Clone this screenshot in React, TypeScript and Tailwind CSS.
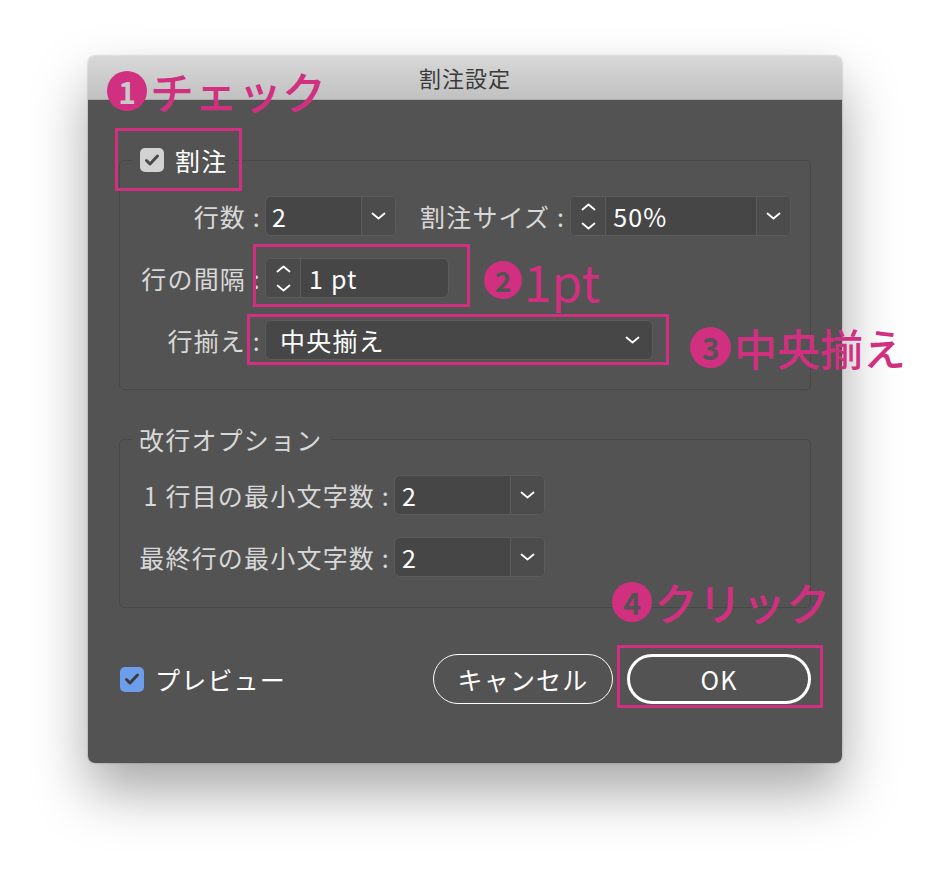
import React from "react";

function Chevron() {
  return (
    <svg width="15" height="8" viewBox="0 0 15 8" fill="none">
      <path d="M1.5 1.5 L7.5 6.5 L13.5 1.5" stroke="white" strokeWidth="1.8" strokeLinecap="round" strokeLinejoin="round" />
    </svg>
  );
}

function ChevronUp() {
  return (
    <svg width="15" height="8" viewBox="0 0 15 8" fill="none">
      <path d="M1.5 6.5 L7.5 1.5 L13.5 6.5" stroke="white" strokeWidth="1.8" strokeLinecap="round" strokeLinejoin="round" />
    </svg>
  );
}

function Stepper() {
  return (
    <div className="w-[35px] h-full flex flex-col items-center justify-center gap-[11px] bg-[#4a4a4a] border-r border-[#5c5c5c]">
      <ChevronUp />
      <Chevron />
    </div>
  );
}

function DropBtn() {
  return (
    <div className="w-[34px] h-full flex items-center justify-center border-l border-[#5c5c5c] bg-[#4c4c4c]">
      <Chevron />
    </div>
  );
}

function Check({ color }: { color: string }) {
  return (
    <svg width="16" height="14" viewBox="0 0 16 14" fill="none">
      <path d="M2.5 7.5 L6 11 L13.5 3" stroke={color} strokeWidth="3" strokeLinecap="round" strokeLinejoin="round" />
    </svg>
  );
}

function Circle({ n, digit, className }: { n: string; digit: string; className: string }) {
  return (
    <div className={`rounded-full bg-[#d0307f] flex items-center justify-center font-bold ${className}`} style={{ color: digit }}>
      {n}
    </div>
  );
}

export default function App() {
  return (
    <div className="relative w-[949px] h-[871px] bg-white overflow-hidden font-['Noto_Sans_CJK_JP',sans-serif]">
      <div className="pt-[56px] pl-[88px]">
        <div className="w-[754px] rounded-[7px] overflow-hidden shadow-[0_28px_55px_rgba(0,0,0,0.35),0_0_2px_rgba(0,0,0,0.35)]">
          {/* title bar */}
          <div className="h-[44px] flex items-center justify-center bg-gradient-to-b from-[#d8d8d8] to-[#c1c1c1] border-b border-[#adadad] text-[22px] text-[#3a3a3a] tracking-[1px]">
            割注設定
          </div>
          {/* body */}
          <div className="h-[663px] bg-[#535353] px-[31px] pt-[45px] text-[25px] tracking-[1.2px] leading-[30px] text-[#d8d8d8]">
            {/* group 1 */}
            <fieldset className="border border-[#474747] rounded-[5px]">
              <legend className="ml-[12px] px-[8px]">
                <div className="flex items-center h-[30px]">
                  <div className="w-[24px] h-[24px] rounded-[5px] bg-[#d2d2d2] flex items-center justify-center">
                    <Check color="#4a4a4a" />
                  </div>
                  <span className="ml-[11px] text-white">割注</span>
                </div>
              </legend>
              <div className="pt-[21px] pb-[29px] flex flex-col gap-[22px]">
                {/* row 1 */}
                <div className="flex items-center h-[40px]">
                  <div className="w-[141px] text-right">行数 :</div>
                  <div className="ml-[4px] flex h-[40px] w-[131px] rounded-[6px] border border-[#5c5c5c] bg-[#464646] overflow-hidden">
                    <div className="flex-1 flex items-center pl-[6px] text-white">2</div>
                    <DropBtn />
                  </div>
                  <div className="ml-[24px] mr-[5px]">割注サイズ :</div>
                  <div className="flex h-[40px] w-[221px] rounded-[6px] border border-[#5c5c5c] bg-[#464646] overflow-hidden">
                    <Stepper />
                    <div className="flex-1 flex items-center pl-[7px] text-white">50%</div>
                    <DropBtn />
                  </div>
                </div>
                {/* row 2 */}
                <div className="flex items-center h-[40px]">
                  <div className="w-[141px] text-right">行の間隔 :</div>
                  <div className="ml-[4px] flex h-[40px] w-[184px] rounded-[6px] border border-[#5c5c5c] bg-[#464646] overflow-hidden">
                    <Stepper />
                    <div className="flex-1 flex items-center pl-[8px] text-white">1 pt</div>
                  </div>
                </div>
                {/* row 3 */}
                <div className="flex items-center h-[40px]">
                  <div className="w-[141px] text-right">行揃え :</div>
                  <div className="ml-[4px] flex items-center justify-between h-[40px] w-[388px] rounded-[6px] border border-[#5c5c5c] bg-[#474747] pl-[14px] pr-[12px] text-white">
                    <span>中央揃え</span>
                    <Chevron />
                  </div>
                </div>
              </div>
            </fieldset>

            {/* group 2 */}
            <fieldset className="mt-[34px] border border-[#474747] rounded-[5px]">
              <legend className="ml-[12px] pl-[7px] pr-[9px]">
                <div className="h-[30px] flex items-center">改行オプション</div>
              </legend>
              <div className="pt-[21px] pb-[30px] flex flex-col gap-[22px]">
                <div className="flex items-center h-[40px]">
                  <div className="w-[270px] text-right">1 行目の最小文字数 :</div>
                  <div className="ml-[4px] flex h-[40px] w-[151px] rounded-[6px] border border-[#5c5c5c] bg-[#464646] overflow-hidden">
                    <div className="flex-1 flex items-center pl-[7px] text-white">2</div>
                    <DropBtn />
                  </div>
                </div>
                <div className="flex items-center h-[40px]">
                  <div className="w-[270px] text-right">最終行の最小文字数 :</div>
                  <div className="ml-[4px] flex h-[40px] w-[151px] rounded-[6px] border border-[#5c5c5c] bg-[#464646] overflow-hidden">
                    <div className="flex-1 flex items-center pl-[7px] text-white">2</div>
                    <DropBtn />
                  </div>
                </div>
              </div>
            </fieldset>

            {/* bottom row */}
            <div className="mt-[46px] flex items-center justify-between">
              <div className="flex items-center ml-[1px]">
                <div className="w-[24px] h-[25px] rounded-[5px] bg-[#6d9eec] flex items-center justify-center">
                  <Check color="#3c3c3c" />
                </div>
                <span className="ml-[11px] text-white">プレビュー</span>
              </div>
              <div className="flex items-center gap-[14px]">
                <div className="w-[180px] h-[50px] rounded-full border-[1.5px] border-white flex items-center justify-center text-white">
                  キャンセル
                </div>
                <div className="w-[184px] h-[50px] rounded-full border-[3px] border-white flex items-center justify-center text-white">
                  OK
                </div>
              </div>
            </div>
          </div>
        </div>
      </div>

      {/* annotation boxes */}
      <div className="absolute left-[115px] top-[128px] w-[127px] h-[63px] border-[3px] border-[#d0307f]" />
      <div className="absolute left-[253px] top-[244px] w-[217px] h-[63px] border-[3px] border-[#d0307f]" />
      <div className="absolute left-[247px] top-[314px] w-[422px] h-[51px] border-[3px] border-[#d0307f]" />
      <div className="absolute left-[617px] top-[645px] w-[206px] h-[63px] border-[3px] border-[#d0307f]" />

      {/* annotation labels */}
      <div className="absolute left-[107px] top-[69px] flex items-center text-[#d0307f]">
        <Circle n="1" digit="#c9c9c9" className="w-[40px] h-[40px] text-[30px]" />
        <span className="ml-[3px] text-[44px] leading-[44px] font-medium">チェック</span>
      </div>
      <div className="absolute left-[484px] top-[258px] flex items-center text-[#d0307f]">
        <Circle n="2" digit="#535353" className="w-[38px] h-[38px] text-[28px]" />
        <span className="ml-[2px] text-[50px] leading-[44px] font-normal">1pt</span>
      </div>
      <div className="absolute left-[690px] top-[325px] flex items-center text-[#d0307f]">
        <Circle n="3" digit="#535353" className="w-[41px] h-[41px] text-[30px]" />
        <span className="ml-[3px] text-[43px] leading-[44px] font-medium">中央揃え</span>
      </div>
      <div className="absolute left-[612px] top-[580px] flex items-center text-[#d0307f]">
        <Circle n="4" digit="#535353" className="w-[40px] h-[40px] text-[30px]" />
        <span className="ml-[2px] text-[44px] leading-[44px] font-medium">クリック</span>
      </div>
    </div>
  );
}
